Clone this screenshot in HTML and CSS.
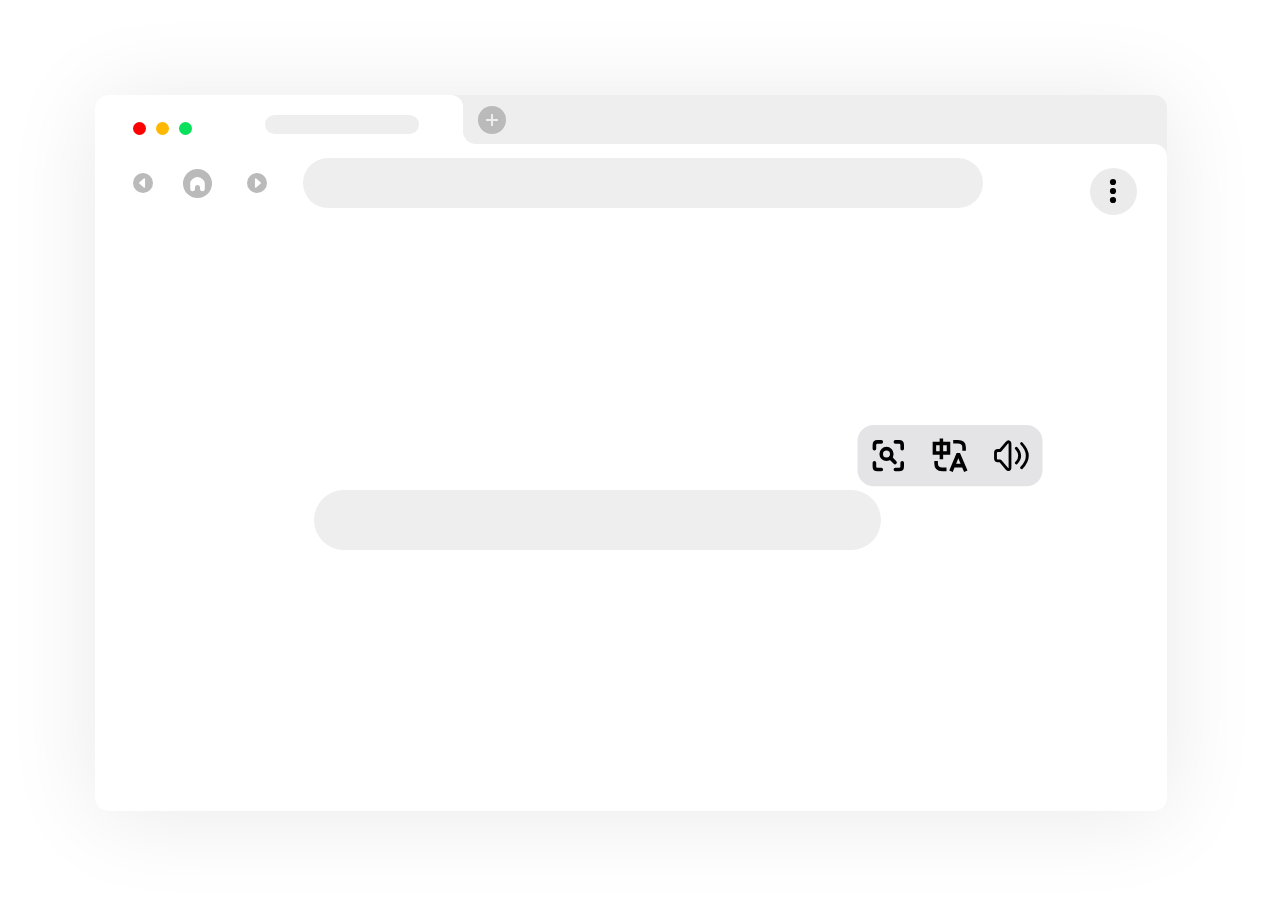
FILE: index.html
```html
<!DOCTYPE html>
<html lang="en">
<head>
<meta charset="utf-8">
<title>Browser</title>
<link rel="stylesheet" href="styles.css">
</head>
<body>
<div class="window">
  <header class="tabs">
    <div class="tab">
      <div class="lights"><i class="light red"></i><i class="light amber"></i><i class="light green"></i></div>
      <div class="tab-title"></div>
    </div>
    <div class="strip-wrap">
      <div class="strip">
        <svg class="add" viewBox="0 0 28 28"><circle cx="14" cy="14" r="14" fill="#bababa"/><path d="M14 8v12M8 14h12" stroke="#eee" stroke-width="2" fill="none"/></svg>
      </div>
    </div>
  </header>
  <div class="page">
    <nav class="toolbar">
      <div class="nav">
        <svg class="arrow" viewBox="0 0 20 20"><circle cx="10" cy="10" r="10" fill="#bababa"/><path d="M6.8 10L11.3 6.1V13.9Z" fill="#fff" stroke="#fff" stroke-width="1.5" stroke-linejoin="round"/></svg>
        <svg class="home" viewBox="0 0 29 29"><circle cx="14.5" cy="14.5" r="14.5" fill="#bababa"/><path d="M7.2 14C7.2 11.4 11.4 8 14.5 8S21.8 11.4 21.8 14V20Q21.8 22.3 19.4 22.3Q17 22.3 17 20V18.6A2.5 2.5 0 0 0 12 18.6V20Q12 22.3 9.6 22.3Q7.2 22.3 7.2 20Z" fill="#fff"/></svg>
        <svg class="arrow" viewBox="0 0 20 20"><circle cx="10" cy="10" r="10" fill="#bababa"/><path d="M13.2 10L8.7 6.1V13.9Z" fill="#fff" stroke="#fff" stroke-width="1.5" stroke-linejoin="round"/></svg>
      </div>
      <div class="address"></div>
      <svg class="menu" viewBox="0 0 47 47"><circle cx="23.5" cy="23.5" r="23.5" fill="#ebebeb"/><circle cx="23" cy="14" r="3.1"/><circle cx="23" cy="23" r="3.1"/><circle cx="23" cy="32" r="3.1"/></svg>
    </nav>
    <main class="content">
      <svg class="actions" viewBox="857 424 186 63">
        <rect x="857.5" y="425" width="185" height="61.3" rx="16" fill="#e4e4e6"/>
        <g class="icon">
          <path d="M874.4 448.7V445Q874.4 441.9 877.5 441.9H881.3M895.4 441.9H899.1Q902.2 441.9 902.2 445V448.7M902.2 462.7V466.4Q902.2 469.5 899.1 469.5H895.4M881.3 469.5H877.5Q874.4 469.5 874.4 466.4V462.7" stroke-width="3.6" stroke-linecap="round"/>
          <circle cx="886.5" cy="453.9" r="5.3" stroke-width="3.6"/><path d="M890.5 457.9L895 462.5" stroke-width="3.7" stroke-linecap="round"/>
        </g>
        <g class="icon">
          <path d="M934.4 443.5H948.5V453.1H934.4ZM941.4 438.5V459.3" stroke-width="3.5"/>
          <path d="M953.2 441.8H957.8Q964.1 441.8 964.1 447.3V450.8M936.1 461V463.5Q936.1 469.4 942.2 469.4H946.5" stroke-width="3.6"/>
          <path d="M951 471.3L958.3 453.6L965.8 471.3M953.7 465.7H963.5" stroke-width="3.7" stroke-linejoin="bevel"/>
        </g>
        <g class="icon">
          <path d="M995.5 452.8Q995.5 450.5 997.8 450.5H1000.2L1006.7 442.8C1008 441.3 1010 441.2 1010 444V467.3C1010 470.1 1008 470 1006.7 468.5L1000.2 460.8H997.8Q995.5 460.8 995.5 458.5Z" stroke-width="2.8" stroke-linejoin="round"/>
          <path d="M1016.3 448.3Q1023 455.7 1016.3 463M1021.6 443.6Q1033 455.7 1021.6 467.8" stroke-width="2.8" stroke-linecap="round"/>
        </g>
      </svg>
      <div class="search"></div>
    </main>
  </div>
</div>
</body>
</html>
```
FILE: styles.css
```css
body {
  margin: 0;
  padding: 95px 0 0 95px;
  background: #fff;
  height: 916px;
  box-sizing: border-box;
  overflow: hidden;
  font-family: "Liberation Sans", sans-serif;
}
svg { display: block; flex: none; }
.window {
  width: 1072px;
  height: 716px;
  border-radius: 13px;
  background: #eee;
  overflow: hidden;
  box-shadow: 0 4px 94px rgba(0, 0, 0, .09);
  display: flex;
  flex-direction: column;
}
.tabs { display: flex; height: 49px; }
.tab {
  width: 368px;
  box-sizing: border-box;
  padding: 20px 44px 0 38px;
  display: flex;
  justify-content: space-between;
  align-items: flex-start;
  background: #fff;
  border-radius: 0 12px 0 0;
}
.lights { display: flex; gap: 10px; padding-top: 7px; }
.light { width: 13px; height: 13px; border-radius: 50%; }
.red { background: #f00; }
.amber { background: #ffb800; }
.green { background: #0be05d; }
.tab-title { width: 154px; height: 19px; border-radius: 10px; background: #eee; }
.strip-wrap { flex: 1; background: #fff; }
.strip {
  height: 49px;
  box-sizing: border-box;
  padding: 11px 15px;
  background: #eee;
  border-radius: 0 0 0 13px;
}
.add { width: 28px; height: 28px; }
/* Grey of the window shows behind the page's rounded corner */
.page { flex: 1; background: #fff; border-radius: 0 13px 0 0; }
.toolbar { display: flex; align-items: flex-start; padding: 14px 30px 0 38px; }
.nav { display: flex; align-items: center; padding-top: 11px; width: 170px; }
.arrow { width: 20px; height: 20px; margin-bottom: 1px; }
.home { width: 29px; height: 29px; margin: 0 35px 0 30px; }
.address { width: 680px; height: 50px; border-radius: 25px; background: #eee; }
.menu { width: 47px; height: 47px; margin: 10px 0 0 auto; }
.content { padding-top: 209px; }
.actions { width: 186px; height: 63px; margin-left: 762px; }
.icon { fill: none; stroke: #000; }
.search {
  width: 567px;
  height: 60px;
  margin: 3px 0 0 219px;
  border-radius: 30px;
  background: #eee;
}
```
